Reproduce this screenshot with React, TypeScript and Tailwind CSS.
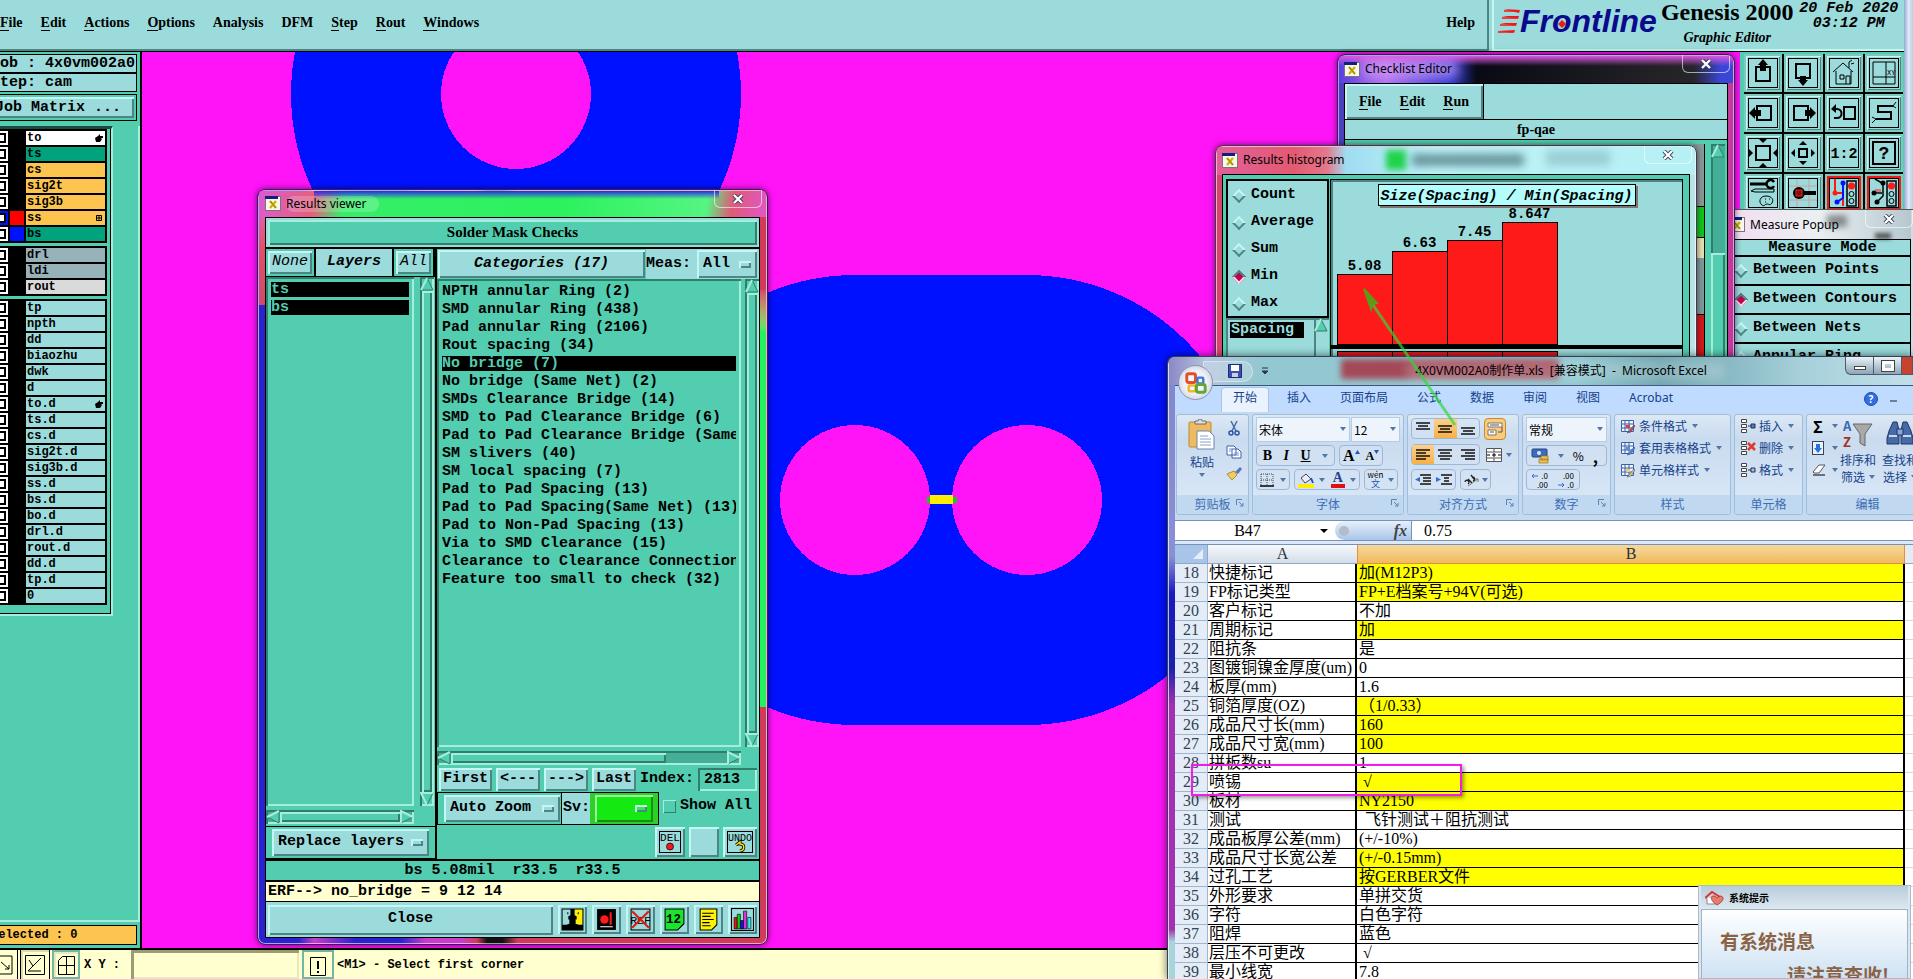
import React, { useState } from "react";
import clsx from "clsx";

const MONO = "font-['Liberation_Mono','Noto_Sans_CJK_SC',monospace]";
const SERIF = "font-['Liberation_Serif','Noto_Sans_CJK_SC',serif]";
const UI = "font-['Noto_Sans','Noto_Sans_CJK_SC',sans-serif]";
const CJK = "font-['Noto_Sans_CJK_SC',sans-serif]";

// Motif style bevels
const AQUA_UP = "bg-[#9bdbdb] shadow-[inset_2px_2px_#c4f6f3,inset_-2px_-2px_#4d8585]";
const TEAL_UP = "bg-[#53cdb0] shadow-[inset_2px_2px_#a4eedb,inset_-2px_-2px_#2f7f6b]";
const TEAL_DOWN = "bg-[#53cdb0] shadow-[inset_2px_2px_#2f7f6b,inset_-2px_-2px_#a4eedb]";

type Layer = { name: string; bg: string; swatch?: string; mark?: "hand" | "grid"; active?: boolean };

const AQ = "bg-[#9bdbdb]";
const layerGroups: Layer[][] = [
  [
    { name: "to", bg: "bg-white", mark: "hand" },
    { name: "ts", bg: "bg-[#00a37c]" },
    { name: "cs", bg: "bg-[#fdc550]" },
    { name: "sig2t", bg: "bg-[#fdc550]" },
    { name: "sig3b", bg: "bg-[#fdc550]" },
    { name: "ss", bg: "bg-[#fdc550]", swatch: "bg-[#ff0000]", mark: "grid", active: true },
    { name: "bs", bg: "bg-[#00a37c]", swatch: "bg-[#0011ff]" },
  ],
  [
    { name: "drl", bg: "bg-[#98b2ba]" },
    { name: "ldi", bg: "bg-[#98b2ba]" },
    { name: "rout", bg: "bg-[#dadada]" },
  ],
  [
    "tp", "npth", "dd", "biaozhu", "dwk", "d", "to.d", "ts.d", "cs.d", "sig2t.d",
    "sig3b.d", "ss.d", "bs.d", "bo.d", "drl.d", "rout.d", "dd.d", "tp.d", "0",
  ].map((name) => ({ name, bg: AQ, mark: name === "to.d" ? ("hand" as const) : undefined })),
];

const categories = [
  "NPTH annular Ring (2)",
  "SMD annular Ring (438)",
  "Pad annular Ring (2106)",
  "Rout spacing (34)",
  "No bridge (7)",
  "No bridge (Same Net) (2)",
  "SMDs Clearance Bridge (14)",
  "SMD to Pad Clearance Bridge (6)",
  "Pad to Pad Clearance Bridge (Same",
  "SM slivers (40)",
  "SM local spacing (7)",
  "Pad to Pad Spacing (13)",
  "Pad to Pad Spacing(Same Net) (13)",
  "Pad to Non-Pad Spacing (13)",
  "Via to SMD Clearance (15)",
  "Clearance to Clearance Connection",
  "Feature too small to check (32)",
];

const sheet: [number, string, string, boolean][] = [
  [18, "快捷标记", "加(M12P3)", true],
  [19, "FP标记类型", "FP+E档案号+94V(可选)", true],
  [20, "客户标记", "不加", false],
  [21, "周期标记", "加", true],
  [22, "阻抗条", "是", false],
  [23, "图镀铜镍金厚度(um)", "0", false],
  [24, "板厚(mm)", "1.6", false],
  [25, "铜箔厚度(OZ)", "（1/0.33）", true],
  [26, "成品尺寸长(mm)", "160", true],
  [27, "成品尺寸宽(mm)", "100", true],
  [28, "拼板数su", "1", false],
  [29, "喷锡", "√", true],
  [30, "板材", "NY2150", true],
  [31, "测试", "飞针测试＋阻抗测试", false],
  [32, "成品板厚公差(mm)", "(+/-10%)", false],
  [33, "成品尺寸长宽公差", "(+/-0.15mm)", true],
  [34, "过孔工艺", "按GERBER文件", true],
  [35, "外形要求", "单拼交货", false],
  [36, "字符", "白色字符", false],
  [37, "阻焊", "蓝色", false],
  [38, "层压不可更改", "√", false],
  [39, "最小线宽", "7.8", false],
];

const bars = [
  { label: "5.08", h: 71 },
  { label: "6.63", h: 94 },
  { label: "7.45", h: 105 },
  { label: "8.647", h: 123 },
];

/* ---------- small shared pieces ---------- */

function MenuItem({ text, underline = true }: { text: string; underline?: boolean }) {
  return (
    <button className={clsx(SERIF, "text-sm leading-5 font-bold whitespace-nowrap")}>
      {underline ? (
        <>
          <span className="border-b border-black">{text[0]}</span>
          {text.slice(1)}
        </>
      ) : (
        text
      )}
    </button>
  );
}

function Arrow({ dir }: { dir: "up" | "down" | "left" | "right" }) {
  const pts = { up: "7,1 13,13 1,13", down: "1,1 13,1 7,13", left: "1,7 13,1 13,13", right: "1,1 13,7 1,13" }[dir];
  const lit = { up: "1,13 7,1", down: "7,13 1,1 13,1", left: "1,7 13,1", right: "1,13 1,1 13,7" }[dir];
  return (
    <button aria-label={`Scroll ${dir}`} className="block size-3.5 shrink-0">
      <svg viewBox="0 0 14 14" className="size-full">
        <polygon points={pts} fill="#53cdb0" stroke="#2f7f6b" strokeWidth="1" />
        <polyline points={lit} fill="none" stroke="#a4eedb" strokeWidth="2" />
      </svg>
    </button>
  );
}

function VScroll() {
  return (
    <div className={clsx("flex w-3.5 shrink-0 flex-col", TEAL_DOWN)}>
      <Arrow dir="up" />
      <div className={clsx("mx-0.5 flex-1", TEAL_UP)} />
      <Arrow dir="down" />
    </div>
  );
}

function HScroll({ thumb }: { thumb: string }) {
  return (
    <div className="flex h-3.5 shrink-0 bg-[#45ae96] shadow-[inset_2px_2px_#2f7f6b,inset_-2px_-2px_#a4eedb]">
      <Arrow dir="left" />
      <div className="flex-1 py-0.5">
        <div className={clsx("h-full", TEAL_UP, thumb)} />
      </div>
      <Arrow dir="right" />
    </div>
  );
}

function OptionMenu({ label, value, className }: { label: string; value: string; className?: string }) {
  return (
    <div className={clsx("relative", className)}>
      <select aria-label={label} className="block size-full appearance-none pl-1.5 text-[15px] font-bold outline-none">
        <option>{value}</option>
      </select>
      <span className="pointer-events-none absolute inset-y-0 right-1.5 flex items-center">
        <span className="h-[7px] w-3 bg-[#9bdbdb]/30 shadow-[inset_2px_2px_#c4f6f3,inset_-2px_-2px_#4d8585]" />
      </span>
    </div>
  );
}

function WinIcon() {
  return (
    <svg viewBox="0 0 16 15" className="h-[15px] w-4 shrink-0">
      <rect x="0.5" y="0.5" width="15" height="14" fill="#f7f7ee" stroke="#777" />
      <rect x="0" y="0" width="13" height="3" fill="#10207c" />
      <path d="M5 5l6 7M11 5l-6 7" stroke="#c9b400" strokeWidth="2.2" />
      <path d="M5 5l6 7" stroke="#7a6f10" strokeWidth="0.8" />
    </svg>
  );
}

function CloseX({ className }: { className?: string }) {
  return (
    <button aria-label="Close window" className={clsx("flex h-[18px] w-12 items-center justify-center rounded-b-md border border-t-0 border-white/60", className)}>
      <svg viewBox="0 0 12 10" className="h-2.5 w-3">
        <path d="M2 1l8 8M10 1l-8 8" stroke="#333a55" strokeWidth="4" />
        <path d="M2 1l8 8M10 1l-8 8" stroke="#fff" strokeWidth="2.4" />
      </svg>
    </button>
  );
}

function Diamond({ name, label, checked, onPick }: { name: string; label: string; checked: boolean; onPick: () => void }) {
  return (
    <label className="flex h-[27px] items-center gap-[7px] text-[15px] font-bold whitespace-nowrap">
      <input
        type="radio"
        name={name}
        checked={checked}
        onChange={onPick}
        className="ml-0.5 size-2.5 shrink-0 rotate-45 appearance-none border-2 border-t-[#c4f6f3] border-r-[#4d8585] border-b-[#4d8585] border-l-[#c4f6f3] checked:border-t-[#4d8585] checked:border-r-[#f3dfe8] checked:border-b-[#f3dfe8] checked:border-l-[#4d8585] checked:bg-[#c3004e]"
      />
      {label}
    </label>
  );
}

/* ---------- header ---------- */

function TopBar() {
  return (
    <header className="flex h-[52px] shrink-0 border-b border-black bg-[#9bdbdb]">
      <nav className="flex flex-1 items-center gap-[18px] border-r-2 border-b-2 border-[#4d8585] pb-1">
        <MenuItem text="File" />
        <MenuItem text="Edit" />
        <MenuItem text="Actions" />
        <MenuItem text="Options" />
        <MenuItem text="Analysis" underline={false} />
        <MenuItem text="DFM" underline={false} />
        <MenuItem text="Step" />
        <MenuItem text="Rout" />
        <MenuItem text="Windows" />
        <span className="flex-1" />
        <span className="pr-3">
          <MenuItem text="Help" underline={false} />
        </span>
      </nav>
      <div className="ml-[3px] flex w-[412px] border-b-2 border-l-2 border-[#c4f6f3] pl-1">
        <div className="relative flex items-center pr-1 pb-2">
          <svg viewBox="0 0 22 26" className="h-[26px] w-[22px]">
            <path d="M6 1l16 1-1 3zM4 8l17 0-1 3zM2 15l17 0-1 3zM0 23l17-1-1 3z" fill="#f01818" />
            <path d="M6 3h14M4 10h14M2 17h14M0 24h14" stroke="#f01818" strokeWidth="1.4" />
          </svg>
          <span className="font-['Liberation_Sans',sans-serif] text-[32px] leading-8 font-bold text-[#0a0a8c] italic">Frontline</span>
          <svg viewBox="0 0 8 8" className="absolute top-5 left-[60px] size-2">
            <path d="M4 0l4 4-4 4-4-4z" fill="#f01818" />
          </svg>
        </div>
        <div className={clsx(SERIF, "flex flex-col items-center font-bold")}>
          <span className="h-[30px] text-2xl leading-6 whitespace-nowrap">Genesis 2000</span>
          <span className="text-sm leading-4 whitespace-nowrap italic">Graphic Editor</span>
        </div>
        <div className="flex flex-1 flex-col items-center pt-px text-[15px] leading-[15px] font-bold whitespace-nowrap italic">
          <span>20 Feb 2020</span>
          <span>03:12 PM</span>
        </div>
      </div>
    </header>
  );
}

/* ---------- layer side panel ---------- */

function LayerRow({ layer }: { layer: Layer }) {
  return (
    <label className="flex h-3.5 bg-black">
      <span className={clsx("flex w-[18px] items-center justify-end pr-0.5", layer.active ? "bg-[#0011ff]" : "bg-white")}>
        <input type="checkbox" className="size-2.5 appearance-none border-2 border-black bg-white" />
      </span>
      <span className="w-[18px] px-0.5">
        <span className={clsx("block h-full", layer.swatch)} />
      </span>
      <span className={clsx("flex flex-1 items-center justify-between px-px pr-0.5 text-xs leading-[14px] font-bold", layer.bg)}>
        {layer.name}
        {layer.mark === "hand" && (
          <svg viewBox="0 0 8 8" className="size-2">
            <path d="M0 4l3-2 2-2v2h3v2H6l1 1-2 3H1z" />
          </svg>
        )}
        {layer.mark === "grid" && (
          <svg viewBox="0 0 6 6" className="mr-px size-1.5">
            <path d="M0.5 0.5h5v5h-5zM3 0v6M0 3h6" fill="none" stroke="#000" />
          </svg>
        )}
      </span>
    </label>
  );
}

function SidePanel() {
  return (
    <aside className="-ml-3 flex w-[154px] shrink-0 flex-col border-r-2 border-black bg-[#53cdb0] pt-0.5 text-[15px] font-bold">
      <div className="mr-[3px] h-[19px] border border-black bg-[#9bdbdb] pl-0.5 leading-[17px] whitespace-pre">Job : 4x0vm002a0</div>
      <div className="mr-[3px] h-[19px] border border-black bg-[#9bdbdb] pl-0.5 leading-[17px] whitespace-pre">Step: cam</div>
      <div className="mt-0.5 mr-[3px] h-[27px] border border-black p-0.5">
        <button className={clsx("h-full w-full pl-1 text-left whitespace-pre", AQUA_UP)}>Job Matrix ...</button>
      </div>
      <div className="mt-[5px] flex flex-1 flex-col border-r-2 border-b-2 border-[#a4eedb]">
        <div className="mr-[25px] border-t-[3px] border-r-2 border-b-2 border-t-[#1c4a3e] border-r-[#a4eedb] border-b-[#a4eedb]">
          <div className="flex flex-col gap-[3px] border-r border-b border-black pr-[3px] pb-2">
            {layerGroups.map((group, i) => (
              <div key={i} className="flex flex-col gap-0.5 border-2 border-black bg-black">
                {group.map((layer) => (
                  <LayerRow key={layer.name} layer={layer} />
                ))}
              </div>
            ))}
          </div>
        </div>
      </div>
      <div className="my-[3px] mr-[3px] h-5 border border-black bg-[#fdc550] pl-0.5 text-xs leading-[18px]">Selected : 0</div>
    </aside>
  );
}

/* ---------- board canvas ---------- */

function Board() {
  return (
    <div className="flex-1 overflow-hidden bg-[#ff14f8]">
      <svg className="h-full w-full" shapeRendering="crispEdges">
        <circle cx="374" cy="42" r="225" fill="#0011ff" />
        <circle cx="374" cy="42" r="75" fill="#ff14f8" />
        <rect x="488" y="223" width="622" height="450" rx="225" fill="#0011ff" />
        <circle cx="713" cy="448" r="75" fill="#ff14f8" />
        <circle cx="885" cy="448" r="75" fill="#ff14f8" />
        <rect x="785" y="445" width="30" height="6" fill="#18c81c" />
        <rect x="788" y="443" width="23" height="9" fill="#fdee00" />
      </svg>
    </div>
  );
}

/* ---------- tool palette ---------- */

const K = { fill: "none", stroke: "#000", strokeWidth: 2 } as const;
const tools: { name: string; red?: boolean; art: React.ReactNode }[] = [
  { name: "Pan up", art: <><rect x="8" y="9" width="14" height="14" {...K} /><path d="M15 1l5 6h-2v6h-6V7h-2z" /></> },
  { name: "Pan down", art: <><rect x="8" y="6" width="14" height="14" {...K} /><path d="M15 28l5-6h-2v-4h-6v4h-2z" /></> },
  { name: "Home", art: <><path d="M4 14L14 5l10 9M7 13v13h15V13M20 10V4M11 17h4v4h-4zM17 26v-8h4v8" fill="none" stroke="#000" /><path d="M20 4l3-2M22 6l3-1" stroke="#000" fill="none" /></> },
  { name: "Coordinates", art: <><path d="M4 4h22v22H4zM4 19h22M17 4v22" fill="none" stroke="#000" /><text x="18" y="17" fontSize="7">XY</text></> },
  { name: "Pan left", art: <><rect x="9" y="8" width="14" height="14" {...K} /><path d="M1 15l6-6v3h6v6H7v3z" /></> },
  { name: "Pan right", art: <><rect x="6" y="8" width="14" height="14" {...K} /><path d="M28 15l-6-6v3h-5v6h5v3z" /></> },
  { name: "Previous view", art: <><rect x="15" y="9" width="11" height="12" {...K} /><path d="M4 11h4a3 3 0 0 1 0 9H5" {...K} /><path d="M2 11l5-5v9z" /></> },
  { name: "Serpentine", art: <><path d="M24 8H9v6h13v7H7" {...K} /><path d="M24 8l3-4M24 8l3 2M7 21l-4-2M7 21l-4 4" fill="none" stroke="#000" /></> },
  { name: "Zoom out", art: <><rect x="8" y="8" width="14" height="14" {...K} /><path d="M11 1h8l-4 4zM11 29h8l-4-4zM1 11v8l4-4zM29 11v8l-4-4z" /></> },
  { name: "Zoom in", art: <><rect x="11" y="11" width="8" height="8" {...K} /><path d="M11 7h8l-4-4zM11 23h8l-4 4zM7 11v8l-4-4zM23 11v8l4-4z" /></> },
  { name: "Scale", art: <text x="15" y="20" fontSize="15" fontWeight="bold" textAnchor="middle">1:2</text> },
  { name: "Help", art: <><rect x="4" y="4" width="22" height="22" {...K} /><text x="15" y="21" fontSize="18" fontWeight="bold" textAnchor="middle">?</text></> },
  { name: "Tools", art: <><path d="M2 6h17" stroke="#000" strokeWidth="3" /><path d="M26 4a4 4 0 1 0 0 4" stroke="#000" strokeWidth="2.5" fill="none" /><path d="M3 13l4-2h19v3H7z" fill="none" stroke="#000" /><path d="M14 27c-4-3-2-9 4-9s8 4 6 7-3 1-5 1-3 3-5 1z" fill="none" stroke="#000" /><path d="M17 21h1M21 21h1M17 24h1" stroke="#000" /></> },
  { name: "Snap", art: <><path d="M9 1v28M21 1v28M1 8h28M1 22h28" stroke="#c8a0a4" /><path d="M13 15h15" stroke="#000" strokeWidth="4" /><circle cx="11" cy="15" r="6" /><rect x="8" y="12" width="6" height="6" fill="#7a1010" stroke="#ff2020" /></> },
  { name: "Net colors", red: true, art: <><path d="M6 1v14h8v13" fill="none" stroke="#ff1a1a" strokeWidth="2" /><path d="M14 6v14l-6 4" fill="none" stroke="#0011ff" strokeWidth="2" /><circle cx="14" cy="5" r="2.5" fill="#0011ff" /><circle cx="8" cy="24" r="2.5" fill="#0011ff" /><circle cx="6" cy="15" r="2.5" fill="#ff1a1a" /><rect x="18" y="3" width="9" height="25" fill="#9bdbdb" stroke="#000" strokeWidth="1.5" /><circle cx="22.5" cy="8" r="3.5" fill="#ff1a1a" /><circle cx="22.5" cy="16" r="2.5" fill="none" stroke="#000" /><circle cx="22.5" cy="23" r="2.5" fill="none" stroke="#000" /></> },
  { name: "Net check", red: true, art: <><path d="M14 6v12l-6 6M6 15h7M13 5L6 1" fill="none" stroke="#000" strokeWidth="1.5" /><path d="M7 11v3M9 11v3M11 11v3" stroke="#ff1a1a" /><circle cx="14" cy="5" r="2.5" /><circle cx="8" cy="24" r="2.5" /><circle cx="5" cy="15" r="2.5" /><rect x="18" y="3" width="9" height="25" fill="#9bdbdb" stroke="#000" strokeWidth="1.5" /><circle cx="22.5" cy="8" r="3.5" fill="#ff1a1a" /><circle cx="22.5" cy="16" r="2.5" fill="none" stroke="#000" /><circle cx="22.5" cy="23" r="2.5" fill="none" stroke="#000" /></> },
];

function ToolPalette() {
  return (
    <aside className="w-[164px] shrink-0 bg-[#53cdb0] pt-0.5 pr-px pl-1">
      <div className="grid grid-cols-4 gap-0.5 bg-black">
        {tools.map((t) => (
          <button key={t.name} aria-label={t.name} className="h-[38px] border-2 border-[#7ec9bd] bg-[#9bdbdb] p-0.5 shadow-[inset_1px_1px_#c4f6f3,inset_-1px_-1px_#4d8585]">
            <svg viewBox="0 0 30 30" className={clsx("mx-auto size-[30px]", t.red && "outline-2 outline-[#f01818]")}>
              <rect x="0.5" y="0.5" width="29" height="29" fill="none" stroke="#000" />
              {t.art}
            </svg>
          </button>
        ))}
      </div>
    </aside>
  );
}

/* ---------- bottom bar ---------- */

function BottomBar() {
  return (
    <footer className="flex h-[31px] shrink-0 border-t-2 border-black bg-[#ffffcf] text-xs font-bold">
      <button aria-label="Absolute" className="w-[18px] overflow-hidden border-r border-black">
        <svg viewBox="0 0 18 27" className="h-[27px] w-[18px]"><path d="M-8 5h20v18H-8M1 11l8 7M9 14v4H5" fill="none" stroke="#000" /></svg>
      </button>
      <button aria-label="Angle" className="ml-0.5 w-[30px] border-r border-l border-black shadow-[inset_2px_2px_#dcdcb0]">
        <svg viewBox="0 0 28 27" className="h-[27px] w-7"><path d="M4.5 4.5h19v19h-19zM7 20L20 7M7 20h13M8 9l4 6" fill="none" stroke="#000" /></svg>
      </button>
      <button aria-label="Grid" className="ml-0.5 w-7 border-2 border-[#6fb8a4] shadow-[inset_2px_2px_#e8e8c0]">
        <svg viewBox="0 0 24 27" className="h-[27px] w-6"><path d="M4.5 8.5l4-4h12v18h-16zM12.5 4v18M4 13.5h16" fill="none" stroke="#000" /></svg>
      </button>
      <label className="flex items-center">
        <span className="w-[51px] pl-1 whitespace-pre">X Y :</span>
        <input className="h-full w-[168px] bg-[#ffffcf] px-2 outline-none shadow-[inset_3px_3px_#9c9c74,inset_-2px_-2px_#e8e8c0]" />
      </label>
      <button aria-label="Alert" className="ml-[3px] w-8 border-2 border-[#6fb8a4]">
        <svg viewBox="0 0 28 27" className="h-[27px] w-7"><path d="M6.5 5.5h15v18h-15z" fill="none" stroke="#000" /><path d="M14 9v8M14 19v2" stroke="#000" strokeWidth="2" /></svg>
      </button>
      <span className="flex items-center pl-[3px] whitespace-pre">{"<M1> - Select first corner"}</span>
    </footer>
  );
}

/* ---------- results viewer ---------- */

const actionIcons: [string, React.ReactNode][] = [
  ["Compare", <><rect x="1" y="1" width="20" height="20" fill="#9bdbdb" /><path d="M13 1h8v15h-8z" fill="#ffee00" /><path d="M9 1h4v6l2 1v3h-1v4l3 1h4v5H1v-5h4l3-1v-4H7V8l2-1z" /><path d="M6 5h1M16 5h1" stroke="#000" strokeWidth="2" /><path d="M1 1h20v20H1z" fill="none" stroke="#000" /></>],
  ["Record", <><rect x="2" y="1" width="18" height="20" /><circle cx="9" cy="11" r="4" fill="#ff1a1a" /><path d="M15 4v12" stroke="#ff1a1a" strokeWidth="2" /><path d="M5 18h12" stroke="#fff" /></>],
  ["Clear reference", <><rect x="2" y="1" width="18" height="20" fill="none" stroke="#000" /><text x="11" y="15" fontSize="11" fontWeight="normal" textAnchor="middle">REF</text><path d="M3 3l16 16M19 3L3 19" stroke="#e01818" strokeWidth="2" /></>],
  ["Numbers", <><path d="M2 1h18v14l-6 6H2z" fill="#19e62a" stroke="#000" /><text x="10" y="14" fontSize="12" textAnchor="middle">12</text></>],
  ["Notes", <><path d="M3 1h16v15l-5 5H3z" fill="#fff200" stroke="#000" /><path d="M5 5h11M5 8h8M5 11h11M5 14h7M5 17h8" stroke="#000" /></>],
  ["Histogram", <><rect x="0.5" y="0.5" width="21" height="21" fill="none" stroke="#000" /><path d="M3 9h3v11H3z" fill="#e11" stroke="#000" strokeWidth=".6" /><path d="M6 6h3v14H6z" fill="#1c1" stroke="#000" strokeWidth=".6" /><path d="M9 12h3v8H9z" fill="#11e" stroke="#000" strokeWidth=".6" /><path d="M12 3h3v17h-3z" fill="#d3d" stroke="#000" strokeWidth=".6" /><path d="M16 9h3v11h-3z" fill="#3ee" stroke="#000" strokeWidth=".6" /></>],
];

function ResultsViewer() {
  const [selected, setSelected] = useState("No bridge (7)");
  return (
    <section className="absolute top-[189px] left-[257px] flex h-[756px] w-[511px] flex-col overflow-hidden rounded-lg border border-[#3b1a6a] bg-[linear-gradient(90deg,#2a22cf_0,#2a22cf_8%,#c83cc8_11%,#2a22cf_19%,#2a22cf_28%,#c83cc8_33%,#c83cc8_40%,#d23a5a_43%,#111_45%,#111_48%,#d23a5a_51%,#d23a5a_100%)] px-[7px] pb-1.5 shadow-[0_0_6px_rgba(0,0,0,0.6),inset_0_0_0_1px_rgba(255,255,255,0.6)]">
      {/* glass frame tints */}
      <div className="absolute top-0 left-px h-[115px] w-1.5 bg-linear-to-b from-[#e264d8] via-[#e2506a] to-[#d2486a]" />
      <div className="absolute top-[100px] right-px h-[417px] w-1.5 bg-linear-to-b from-[#d2486a] via-[#25f060] via-10% to-[#25f060]" />
      <div className="absolute inset-x-px top-px h-[26px] bg-[linear-gradient(100deg,#dd5bd0_0,#e4607c_11%,#35ee68_17%,#2cf25e_60%,#55f582_88%,#e05a78_93%,#df58c8_100%)]" />
      <div className="absolute top-px right-12 left-14 h-2 bg-linear-to-b from-[#2a2ae8] to-transparent" />
      <div className={clsx(UI, "relative flex h-[27px] shrink-0 items-center gap-[5px] text-xs")}>
        <WinIcon />
        <span className="rounded-full bg-white/20 pr-3">Results viewer</span>
        <CloseX className="absolute top-0 -right-0.5" />
      </div>
      <div className="relative flex min-h-0 flex-1 flex-col border border-black bg-[#53cdb0] text-[15px] font-bold">
        <div className="h-[31px] shrink-0 border-b-2 border-black bg-[#9bdbdb] p-0.5">
          <div className={clsx(SERIF, "h-full text-center text-[15px] leading-[25px]", TEAL_UP)}>Solder Mask Checks</div>
        </div>
        <div className="flex min-h-0 flex-1 border-b-2 border-black">
          <div className="flex w-[171px] flex-col border-r-2 border-black">
            <div className="flex h-7 shrink-0 gap-0.5 border-b border-black bg-black pr-0.5 text-[15px]">
              <div className="w-[48px] bg-[#53cdb0] p-0.5"><button className={clsx("size-full font-normal italic", AQUA_UP)}>None</button></div>
              <div className="flex-1 bg-[#9bdbdb] text-center leading-[26px] italic">Layers</div>
              <div className="w-[39px] bg-[#53cdb0] p-0.5"><button className={clsx("size-full font-normal italic", AQUA_UP)}>All</button></div>
            </div>
            <div className="flex min-h-0 flex-1 gap-1.5 pr-px">
              <div className="flex flex-1 flex-col gap-1">
                <ul className={clsx("flex flex-1 flex-col gap-[3px] px-[5px] pt-[5px] leading-[15px] text-[#53cdb0]", TEAL_DOWN)}>
                  <li className="bg-black">ts</li>
                  <li className="bg-black">bs</li>
                </ul>
                <HScroll thumb="w-full" />
              </div>
              <div className="flex pb-[18px]"><VScroll /></div>
            </div>
            <div className="mt-0.5 h-[33px] border-t border-b border-black px-1.5 py-0.5">
              <OptionMenu label="Layer mode" value="Replace layers" className={clsx("h-full", AQUA_UP)} />
            </div>
          </div>
          <div className="flex min-w-0 flex-1 flex-col">
            <div className="flex h-[30px] shrink-0 items-center bg-[#9bdbdb]">
              <div className="h-full w-[209px] bg-[#53cdb0] p-px"><button className={clsx("size-full italic", AQUA_UP)}>Categories (17)</button></div>
              <span className="flex-1">Meas:</span>
              <OptionMenu label="Meas:" value="All" className={clsx("mr-0.5 h-7 w-[60px]", AQUA_UP)} />
            </div>
            <div className="flex min-h-0 flex-1 gap-1 pr-px">
              <div className="flex w-[304px] flex-col gap-1">
                <ul className={clsx("flex-1 overflow-hidden px-[5px] pt-[5px]", TEAL_DOWN)}>
                  {categories.map((c) => (
                    <li key={c} className="mb-[3px]">
                      <button
                        onClick={() => setSelected(c)}
                        className={clsx("block h-[15px] w-full overflow-hidden text-left leading-[15px] whitespace-nowrap", selected === c && "bg-black text-[#53cdb0]")}
                      >
                        {c}
                      </button>
                    </li>
                  ))}
                </ul>
                <HScroll thumb="w-[78%]" />
              </div>
              <div className="flex pb-[18px]"><VScroll /></div>
            </div>
            <div className="flex h-[27px] shrink-0 items-center gap-1 px-0.5 pt-0.5">
              <button className={clsx("h-[23px] w-[53px]", AQUA_UP)}>First</button>
              <button className={clsx("h-[23px] w-11", AQUA_UP)}>{"<---"}</button>
              <button className={clsx("h-[23px] w-11", AQUA_UP)}>{"--->"}</button>
              <button className={clsx("h-[23px] w-11", AQUA_UP)}>Last</button>
              <label htmlFor="idx">Index:</label>
              <input id="idx" defaultValue="2813" className={clsx("h-[23px] w-[59px] pl-1.5 outline-none", TEAL_DOWN)} />
            </div>
            <div className="flex h-[33px] shrink-0">
              <div className="w-[125px] border border-black py-0.5 pr-px pl-1.5">
                <OptionMenu label="Zoom mode" value="Auto Zoom" className={clsx("h-full", AQUA_UP)} />
              </div>
              <div className="flex w-[97px] items-center border-y border-r border-black bg-[#9bdbdb] pl-px">
                <span className="flex-1">Sv:</span>
                <div className="h-full w-[68px] bg-[#2fcf2a] px-[5px] py-0.5">
                  <OptionMenu label="Sv:" value="" className="h-full bg-[#14ea12] shadow-[inset_2px_2px_#9df5a0,inset_-2px_-2px_#1a8a1c]" />
                </div>
              </div>
              <label className="flex h-7 items-center gap-1 pl-1 whitespace-nowrap">
                <input type="checkbox" className="size-[13px] appearance-none bg-[#53cdb0] shadow-[inset_1px_1px_#a4eedb,inset_-1px_-1px_#2f7f6b]" />
                Show All
              </label>
            </div>
            <div className="flex h-[34px] shrink-0 items-center justify-end gap-1 pr-0.5">
              <button aria-label="Delete" className={clsx("size-[30px] p-1", AQUA_UP)}>
                <svg viewBox="0 0 22 22"><rect x="0.5" y="0.5" width="21" height="21" fill="none" stroke="#000" /><text x="11" y="10" fontSize="11" fontWeight="normal" textAnchor="middle">DEL</text><circle cx="11" cy="15.5" r="3.5" fill="#f01818" stroke="#000" strokeWidth=".7" /></svg>
              </button>
              <button aria-label="Blank" className={clsx("size-[30px]", AQUA_UP)} />
              <button aria-label="Undo" className={clsx("h-[30px] w-[34px] p-1", AQUA_UP)}>
                <svg viewBox="0 0 26 22"><rect x="0.5" y="0.5" width="25" height="21" fill="none" stroke="#000" /><text x="13" y="10" fontSize="10" fontWeight="normal" textAnchor="middle">UNDO</text><path d="M9 14l4-3v2c5 0 5 6 0 7" fill="none" stroke="#000" strokeWidth="3" /><path d="M9 14l4-3v2c5 0 5 6 0 7" fill="none" stroke="#ffe000" strokeWidth="1.5" /></svg>
              </button>
            </div>
          </div>
        </div>
        <div className="h-[21px] shrink-0 border-b-2 border-black text-center leading-[19px] whitespace-pre">bs 5.08mil  r33.5  r33.5</div>
        <div className="h-5 shrink-0 border-b border-black bg-[#ffffcf] pl-0.5 leading-[19px] whitespace-pre">{"ERF--> no_bridge = 9 12 14"}</div>
        <div className="flex h-[35px] shrink-0 items-center gap-[5px] bg-[#9bdbdb] px-0.5">
          <button className={clsx("h-[30px] flex-1", AQUA_UP)}>Close</button>
          {actionIcons.map(([name, art]) => (
            <button key={name} aria-label={name} className={clsx("size-[29px] p-[3px]", AQUA_UP)}>
              <svg viewBox="0 0 22 22">{art}</svg>
            </button>
          ))}
        </div>
      </div>
    </section>
  );
}

/* ---------- checklist, measure, histogram ---------- */

function ChecklistEditor() {
  return (
    <section className="absolute top-[54px] left-[1337px] flex h-[330px] w-[398px] flex-col overflow-hidden rounded-t-lg border border-[#3b1a6a] bg-[linear-gradient(90deg,#4b3fc0,#a838b8_50%,#c23a9a)] px-1.5 shadow-[0_0_6px_rgba(0,0,0,0.6),inset_0_0_0_1px_rgba(255,255,255,0.5)]">
      <div className="absolute inset-x-px top-px h-[27px] bg-[linear-gradient(90deg,#5a3fe0_0,#b070f0_12%,#2a3bd8_28%,#0a0a14_35%,#26262a_90%,#3a46d8_97%)]" />
      <div className="absolute inset-x-px top-px h-2.5 bg-linear-to-b from-[#d957e0] to-transparent" />
      <div className="absolute top-1.5 left-6 h-4 w-24 bg-[#d9a0f4]/70 blur-[6px]" />
      <div className={clsx(UI, "relative flex h-7 shrink-0 items-center gap-[5px] text-xs")}>
        <WinIcon />
        Checklist Editor
        <CloseX className="absolute top-0 -right-0.5" />
      </div>
      <div className="relative flex flex-1 flex-col border border-black bg-[#9bdbdb]">
        <div className="flex h-[36px] border-b border-black">
          <div className={clsx("flex items-center gap-[18px] border-r border-black px-3.5", AQUA_UP)}>
            <MenuItem text="File" />
            <MenuItem text="Edit" />
            <MenuItem text="Run" />
          </div>
        </div>
        <div className={clsx(SERIF, "h-5 border-b border-black text-center text-sm leading-[19px] font-bold")}>fp-qae</div>
        <div className="flex flex-1 justify-end gap-1.5 bg-[#53cdb0] pt-1 pr-0.5">
          {/* status column of the check rows */}
          <div className="flex w-3 flex-col border-r border-black">
            <span className="h-[62px] bg-[#8a9a9a]" />
            <span className="h-8 border-y border-black bg-[#12c61a]" />
            <span className="h-5 bg-[#e8e0b0]" />
            <span className="h-14 bg-[#7f9b9b]" />
            <span className="flex-1 border-t border-black bg-[#d81a1a]" />
          </div>
          <div className="flex w-3.5 flex-col bg-[#45ae96] shadow-[inset_2px_2px_#2f7f6b]">
            <Arrow dir="up" />
            <span className="h-[95px]" />
            <span className={clsx("flex-1", TEAL_UP)} />
          </div>
        </div>
      </div>
    </section>
  );
}

const measureModes = ["Between Points", "Between Contours", "Between Nets", "Annular Ring"];

function MeasurePopup() {
  const [mode, setMode] = useState(measureModes[1]);
  return (
    <section className="absolute top-[209px] right-0 left-[1726px] h-[160px] overflow-hidden border-t border-[#555] bg-[#c9dde2] pr-0.5 text-[15px] font-bold">
      <div className={clsx(UI, "relative flex h-[29px] items-center gap-[5px] bg-linear-to-r from-[#f2dcf0] via-[#eaf0f2] to-[#b6c8cf] pl-[3px] text-xs font-normal")}>
        <span className="absolute right-16 bottom-3 h-3 w-5 bg-black/40 blur-[3px]" />
        <span className="absolute right-5 bottom-0 h-1.5 w-4 bg-black/60 blur-[2px]" />
        <WinIcon />
        Measure Popup
        <CloseX className="absolute top-0 -right-0.5" />
      </div>
      <div className="border border-black bg-[#9bdbdb]">
        <div className="h-[15px] text-center leading-[15px]"><span className="pl-2">Measure Mode</span></div>
        {measureModes.map((m) => (
          <div key={m} className="border-t-2 border-black pl-[7px]">
            <Diamond name="measure" label={m} checked={mode === m} onPick={() => setMode(m)} />
          </div>
        ))}
      </div>
    </section>
  );
}

const stats = ["Count", "Average", "Sum", "Min", "Max"];

function Histogram() {
  const [stat, setStat] = useState("Min");
  return (
    <section className="absolute top-[145px] left-[1215px] flex h-[240px] w-[482px] flex-col overflow-hidden rounded-t-lg border border-[#4a3550] bg-[linear-gradient(90deg,#d8466e_0,#d8466e_4%,#9fd8dc_96%,#bfe6ea_100%)] px-1.5 shadow-[0_0_6px_rgba(0,0,0,0.6),inset_0_0_0_1px_rgba(255,255,255,0.6)]">
      <div className="absolute inset-x-px top-px h-7 bg-[linear-gradient(90deg,#e0609a_0,#e45a72_16%,#e4788c_23%,#9fdcf2_27%,#bdf4f8_45%,#b5f0f4_100%)]" />
      <span className="absolute top-1 left-[170px] h-5 w-5 bg-[#1fd24a] blur-[3px]" />
      <span className="absolute top-2 left-[196px] h-3 w-28 bg-[#2f5560]/60 blur-[4px]" />
      <span className="absolute top-1 left-[330px] h-4 w-16 bg-[#6f9aa5]/40 blur-[4px]" />
      <div className={clsx(UI, "relative flex h-[28px] shrink-0 items-center gap-[5px] text-xs")}>
        <WinIcon />
        Results histogram
        <CloseX className="absolute top-0 -right-0.5" />
      </div>
      <div className="relative flex min-h-0 flex-1 gap-px border border-black bg-[#53cdb0] py-1 pr-1.5 pl-[3px] text-[15px] font-bold">
        <div className="flex w-[103px] flex-col">
          <div className="h-[139px] border-2 border-black bg-[#9bdbdb] pt-px pl-1">
            {stats.map((s) => (
              <Diamond key={s} name="stat" label={s} checked={stat === s} onPick={() => setStat(s)} />
            ))}
          </div>
          <div className="flex flex-1 justify-between bg-[#9bdbdb] pr-px shadow-[inset_2px_2px_#4d8585]">
            <span className="mt-1 ml-1 h-4 w-[74px] bg-black pl-px leading-[15px] text-[#9bdbdb]">Spacing</span>
            <div className="w-3.5 shadow-[inset_2px_0_#4d8585]">
              <Arrow dir="up" />
            </div>
          </div>
        </div>
        <div className="relative flex min-w-0 flex-1 flex-col border border-black bg-[#9bdbdb] shadow-[inset_2px_2px_#4d8585]">
          <div className="absolute top-1 left-1/2 -ml-[129px] h-[22px] w-[258px] border border-black bg-[#b3fdfd] text-center leading-6 whitespace-pre italic shadow-[2px_2px_#7d7474]">Size(Spacing) / Min(Spacing)</div>
          <div className="flex h-[165px] shrink-0 items-end pl-1.5">
            {bars.map((b) => (
              <div key={b.label} className="w-[55px] text-center text-sm leading-4 font-bold">
                {b.label}
                <div className="-mr-px border border-black bg-[#ff1a1a]" style={{ height: b.h }} />
              </div>
            ))}
          </div>
          <div className="h-1 shrink-0 bg-black" />
          <div className="mt-0.5 flex flex-1 pl-1.5">
            {bars.map((b) => (
              <div key={b.label} className="-mr-px w-14 border border-black bg-[#d81a22]" />
            ))}
          </div>
        </div>
      </div>
    </section>
  );
}

/* ---------- excel ---------- */

function Caret() {
  return (
    <svg viewBox="0 0 6 4" className="h-1 w-1.5 shrink-0">
      <path d="M0 0h6L3 4z" fill="#5276a8" />
    </svg>
  );
}

function Group({ label, launcher, className, children }: { label: string; launcher?: boolean; className: string; children: React.ReactNode }) {
  return (
    <div className={clsx("flex shrink-0 flex-col overflow-hidden rounded-[3px] border border-[#9ebfdb] bg-linear-to-b from-[#dce8f5] via-[#c9dbee] via-25% to-[#dceafa]", className)}>
      <div className="min-h-0 flex-1 px-[3px]">{children}</div>
      <div className="relative h-[19px] shrink-0 bg-[#c0d8f0] text-center text-xs leading-[18px] text-[#3e6db5]">
        {label}
        {launcher && (
          <svg viewBox="0 0 8 8" className="absolute top-1 right-1 size-2">
            <path d="M0.5 6V0.5H6M3 3l4 4M7 4v3H4" fill="none" stroke="#5b82b5" />
          </svg>
        )}
      </div>
    </div>
  );
}

const BTN = "flex h-[21px] items-center rounded-sm border border-[#9db8d6] bg-[#d3e2f4]/60";

function Lines({ kind }: { kind: "l" | "c" | "r" | "t" | "m" | "b" }) {
  const d = {
    l: "M1 2h14M1 5h10M1 8h14M1 11h10",
    c: "M1 2h14M3 5h10M1 8h14M3 11h10",
    r: "M1 2h14M5 5h10M1 8h14M5 11h10",
    t: "M1 1h14M3 4h10M1 7h14",
    m: "M1 4h14M3 7h10M1 10h14",
    b: "M1 6h14M3 9h10M1 12h14",
  }[kind];
  return (
    <button aria-label={`Align ${kind}`} className={clsx("flex h-full flex-1 items-center justify-center", (kind === "m" || kind === "l") && "bg-linear-to-b from-[#fbd08a] to-[#f9b045]")}>
      <svg viewBox="0 0 16 13" className="h-[13px] w-4">
        <path d={d} stroke="#111" strokeWidth="1.5" />
      </svg>
    </button>
  );
}

function TableIcon({ accent }: { accent: string }) {
  return (
    <svg viewBox="0 0 16 16" className="size-4 shrink-0">
      <path d="M1.5 2.5h12v11h-12zM1 6h12M1 10h12M5 2v11M9 2v11" fill="#eef4fd" stroke="#3c62a5" />
      <path d="M6 7h4v3H6z" fill={accent} />
      <path d="M14 7l-5 6-2 2 4-1 4-6z" fill={accent} stroke="#33508c" strokeWidth=".6" />
    </svg>
  );
}

const tabs = ["开始", "插入", "页面布局", "公式", "数据", "审阅", "视图", "Acrobat"];

function Ribbon() {
  return (
    <div className={clsx(CJK, "flex h-[108px] shrink-0 gap-[3px] overflow-hidden bg-[#c5d9f1] pt-0.5 pb-[5px] pl-px text-xs text-[#15428b]")}>
      <Group label="剪贴板" launcher className="w-[73px]">
        <div className="flex gap-1.5 pt-1">
          <button className="flex w-10 flex-col items-center pl-1">
            <svg viewBox="0 0 28 32" className="h-8 w-7">
              <rect x="1" y="3" width="22" height="25" rx="1" fill="#eebb63" stroke="#b98a3a" />
              <path d="M7 5V2h3a2 2 0 0 1 4 0h4v3z" fill="#ddd" stroke="#555" strokeWidth=".8" />
              <path d="M9 12h12l5 5v13H9z" fill="#fff" stroke="#6a86b5" />
              <path d="M12 17h8M12 20h11M12 23h11M12 26h11" stroke="#8aa4cc" />
            </svg>
            <span className="leading-[22px]">粘贴</span>
            <Caret />
          </button>
          <div className="flex flex-col items-center gap-2 pt-0.5">
            <button aria-label="Cut">
              <svg viewBox="0 0 14 16" className="h-4 w-3.5"><path d="M4 0l5 10M10 0L5 10" stroke="#4d6fa5" strokeWidth="1.5" /><circle cx="4" cy="12" r="2" fill="none" stroke="#2856a8" strokeWidth="1.5" /><circle cx="10" cy="12" r="2" fill="none" stroke="#2856a8" strokeWidth="1.5" /></svg>
            </button>
            <button aria-label="Copy">
              <svg viewBox="0 0 16 14" className="h-3.5 w-4"><path d="M1 1h7l2 2v7H1zM6 4h6l3 3v6H6z" fill="#fff" stroke="#3c62a5" /><path d="M8 8h5M8 10h5M3 4h3M3 6h2" stroke="#6e92cc" /></svg>
            </button>
            <button aria-label="Format painter">
              <svg viewBox="0 0 16 14" className="h-3.5 w-4"><path d="M1 7l7-3 3 4-5 5z" fill="#f3cf57" stroke="#8a6a20" strokeWidth=".7" /><path d="M9 5l5-5 2 2-4 5z" fill="#5a74c0" /></svg>
            </button>
          </div>
        </div>
      </Group>
      <Group label="字体" launcher className="w-[152px]">
        <div className="flex flex-col gap-[3px] pt-0.5 text-black">
          <div className="flex h-[25px] gap-px">
            <div className="relative w-[94px]">
              <select aria-label="Font" className="block size-full appearance-none border border-[#b5cce8] bg-[#edf4fc] pl-0.5 text-xs"><option>宋体</option></select>
              <span className="pointer-events-none absolute top-2.5 right-1 flex"><Caret /></span>
            </div>
            <div className="relative flex-1">
              <select aria-label="Font size" className="block size-full appearance-none border border-[#b5cce8] bg-[#edf4fc] pl-0.5 text-xs"><option>12</option></select>
              <span className="pointer-events-none absolute top-2.5 right-1 flex"><Caret /></span>
            </div>
          </div>
          <div className={clsx(SERIF, "flex gap-1 text-sm")}>
            <div className={clsx(BTN, "w-[79px] justify-around")}>
              <button className="font-bold">B</button>
              <button className="font-bold italic">I</button>
              <button className="font-bold underline">U</button>
              <Caret />
            </div>
            <div className={clsx(BTN, "w-11 justify-around")}>
              <button aria-label="Grow font" className="flex text-base leading-5 font-bold">A<svg viewBox="0 0 5 4" className="mt-1 h-1 w-[5px]"><path d="M0 4h5L2.5 0z" fill="#2856a8" /></svg></button>
              <button aria-label="Shrink font" className="flex text-xs leading-5 font-bold">A<svg viewBox="0 0 5 4" className="mt-1 h-1 w-[5px]"><path d="M0 0h5L2.5 4z" fill="#2856a8" /></svg></button>
            </div>
          </div>
          <div className="flex gap-1">
            <button aria-label="Borders" className={clsx(BTN, "w-[34px] justify-around")}>
              <svg viewBox="0 0 14 14" className="size-3.5"><path d="M1 1h12M1 7h12M1 1v12M7 1v12M13 1v12" stroke="#444" strokeDasharray="1 1" /><path d="M0 13h14" stroke="#000" strokeWidth="1.5" /></svg>
              <Caret />
            </button>
            <div className={clsx(BTN, "w-[66px] justify-around")}>
              <svg viewBox="0 0 16 16" className="size-4"><path d="M3 6l5-4 5 5-6 4z" fill="#e7eef8" stroke="#445" /><path d="M13 6l2 5" stroke="#2856a8" strokeWidth="2" /><rect y="12" width="16" height="4" fill="#ffee00" /></svg>
              <Caret />
              <button className={clsx(SERIF, "border-b-4 border-[#e01010] px-0.5 text-sm leading-3 font-bold text-[#23458c]")}>A</button>
              <Caret />
            </div>
            <button className={clsx(BTN, "w-[34px] justify-around")}>
              <span className="flex flex-col items-center"><span className="text-[8px] leading-[9px]">wén</span><span className="text-[9px] leading-[10px] text-[#2856a8]">文</span></span>
              <Caret />
            </button>
          </div>
        </div>
      </Group>
      <Group label="对齐方式" launcher className="w-[112px]">
        <div className="flex flex-col gap-1 pt-[3px]">
          <div className="flex gap-1">
            <div className={clsx(BTN, "w-[69px]")}><Lines kind="t" /><Lines kind="m" /><Lines kind="b" /></div>
            <button aria-label="Wrap text" className="flex h-[22px] w-[22px] items-center justify-center rounded-sm border border-[#c88a2c] bg-[#fbcb7d]">
              <svg viewBox="0 0 16 16" className="size-4"><path d="M1 2h14v4H1zM1 9h8v5H1z" fill="#fff" stroke="#777" /><path d="M3 4h9M3 11h4M15 6v5h-4" stroke="#555" fill="none" /></svg>
            </button>
          </div>
          <div className="flex items-center gap-1">
            <div className={clsx(BTN, "w-[69px]")}><Lines kind="l" /><Lines kind="c" /><Lines kind="r" /></div>
            <button aria-label="Merge" className="flex items-center gap-1 pl-0.5">
              <svg viewBox="0 0 16 14" className="h-3.5 w-4"><path d="M0.5 0.5h15v13H0.5zM0 4h16M0 10h16M8 0v4M8 10v4" fill="#fff" stroke="#555" /><path d="M1 7h3M12 7h3M7 6h2v2H7z" stroke="#000" fill="none" /></svg>
              <Caret />
            </button>
          </div>
          <div className="flex gap-1">
            <div className={clsx(BTN, "w-[45px] justify-around")}>
              {["M5 2h11M8 5h8M8 8h8M5 11h11", "M5 2h11M8 5h5M8 8h5M5 11h11"].map((d, i) => (
                <button key={d} aria-label={i ? "Increase indent" : "Decrease indent"}>
                  <svg viewBox="0 0 16 13" className="h-[13px] w-4"><path d={d} stroke="#111" strokeWidth="1.5" /><path d={i ? "M0 4v5l5-2.5z" : "M5 4v5L0 6.5z"} fill="#2f6fd0" /></svg>
                </button>
              ))}
            </div>
            <button aria-label="Orientation" className={clsx(BTN, "w-[31px] justify-around")}>
              <svg viewBox="0 0 16 14" className="h-3.5 w-4"><path d="M2 9a2 2 0 1 1 3 2M5 6l4 4M9 4a2 2 0 1 1 1 4M8 2l3 4" fill="none" stroke="#222" strokeWidth="1.3" /><path d="M5 13L15 6M12 6h3v3" fill="none" stroke="#777" /></svg>
              <Caret />
            </button>
          </div>
        </div>
      </Group>
      <Group label="数字" launcher className="w-[89px]">
        <div className="flex flex-col gap-[3px] pt-0.5 text-black">
          <div className="relative h-[25px]">
            <select aria-label="Number format" className="block size-full appearance-none border border-[#b5cce8] bg-[#edf4fc] pl-0.5 text-xs"><option>常规</option></select>
            <span className="pointer-events-none absolute top-2.5 right-1 flex"><Caret /></span>
          </div>
          <div className={clsx(BTN, "justify-between px-1")}>
            <svg viewBox="0 0 18 16" className="h-4 w-[18px]"><rect x="1" y="1" width="15" height="8" rx="1" fill="#3c6cc0" stroke="#24457f" /><circle cx="8" cy="5" r="2" fill="#dfe9f8" /><path d="M8 11h9v4H8zM10 8h7v4h-7z" fill="#f2c14e" stroke="#9a7420" strokeWidth=".7" /></svg>
            <Caret />
            <button>%</button>
            <button className="pr-1 text-base leading-4 font-bold">,</button>
          </div>
          <div className={clsx(BTN, "w-[54px] justify-around")}>
            <button aria-label="Increase decimal">
              <svg viewBox="0 0 18 20" className="h-5 w-[18px]"><path d="M1 6h6M1 6l2-2M1 6l2 2" stroke="#2f6fd0" fill="none" /><text x="17" y="9" fontSize="8" textAnchor="end">.0</text><text x="17" y="18" fontSize="8" textAnchor="end">.00</text></svg>
            </button>
            <button aria-label="Decrease decimal">
              <svg viewBox="0 0 18 20" className="h-5 w-[18px]"><path d="M1 15h6M7 15l-2-2M7 15l-2 2" stroke="#2f6fd0" fill="none" /><text x="17" y="9" fontSize="8" textAnchor="end">.00</text><text x="17" y="18" fontSize="8" textAnchor="end">.0</text></svg>
            </button>
          </div>
        </div>
      </Group>
      <Group label="样式" className="w-[117px]">
        <div className="flex flex-col pl-0.5">
          {([["条件格式", "#d8403a"], ["套用表格格式", "#5b8bdc"], ["单元格样式", "#f0cf6a"]] as const).map(([t, c]) => (
            <button key={t} className="flex h-[22px] items-center gap-[3px] whitespace-nowrap"><TableIcon accent={c} />{t}<span className="pl-0.5"><Caret /></span></button>
          ))}
        </div>
      </Group>
      <Group label="单元格" className="w-[69px]">
        <div className="flex flex-col pl-0.5">
          {([["插入", "#4f7fd0"], ["删除", "#e23a2a"], ["格式", "#9ec0f0"]] as const).map(([t, c]) => (
            <button key={t} className="flex h-[22px] items-center gap-[3px] whitespace-nowrap">
              <svg viewBox="0 0 16 16" className="size-4 shrink-0"><path d="M1.5 1.5h5v3h-5zM1.5 6.5h5v3h-5zM1.5 11.5h5v3h-5z" fill="#fff" stroke="#444" />{t === "删除" ? <path d="M8 3l7 7M15 3l-7 7" stroke={c} strokeWidth="2.5" /> : <path d="M8 8h3M11 6h4v4h-4z" fill={c} stroke="#234" />}</svg>
              {t}<span className="pl-0.5"><Caret /></span>
            </button>
          ))}
        </div>
      </Group>
      <Group label="编辑" className="w-[123px]">
        <div className="flex">
          <div className="flex w-[30px] shrink-0 flex-col pl-0.5">
            <button className="flex h-[22px] items-center gap-2 text-base font-bold text-black"><span className="w-3">Σ</span><Caret /></button>
            <button aria-label="Fill" className="flex h-[22px] items-center gap-2"><svg viewBox="0 0 12 14" className="h-3.5 w-3"><rect x="0.5" y="0.5" width="11" height="13" fill="#e9f1fc" stroke="#345" /><path d="M4 3h4v4h2l-4 5-4-5h2z" fill="#2b6fe0" /></svg><Caret /></button>
            <button aria-label="Clear" className="flex h-[22px] items-center gap-1.5"><svg viewBox="0 0 14 12" className="h-3 w-3.5"><path d="M1 8l6-7h6l-6 8H2z" fill="#fff" stroke="#556" /><path d="M1 11h12" stroke="#000" /></svg><Caret /></button>
          </div>
          <button className="flex w-9 shrink-0 flex-col items-center pt-1 leading-[17px] whitespace-nowrap">
            <svg viewBox="0 0 30 32" className="h-8 w-[30px] shrink-0"><path d="M10 5h19l-7 10v12l-5-3v-9z" fill="#a9a9a9" stroke="#666" /><text x="0" y="12" fontSize="13" fontWeight="bold" fill="#3a69b8">A</text><text x="0" y="28" fontSize="13" fontWeight="bold" fill="#a2302a">Z</text></svg>
            排序和<br />
            <span className="flex items-center gap-1">筛选<Caret /></span>
          </button>
          <button className="ml-1.5 flex w-9 shrink-0 flex-col items-center pt-1 leading-[17px] whitespace-nowrap">
            <svg viewBox="0 0 30 32" className="h-8 w-[30px] shrink-0"><path d="M4 12l4-9h4l2 8v14H2v-6zM26 12l-4-9h-4l-2 8v14h12v-6z" fill="#4669a8" stroke="#1f3768" /><rect x="12" y="10" width="6" height="6" fill="#8aa7d6" stroke="#1f3768" /><path d="M4 17h8M18 17h8" stroke="#c8d8f2" strokeWidth="2" /></svg>
            查找和<br />
            <span className="flex items-center gap-1">选择<Caret /></span>
          </button>
        </div>
      </Group>
    </div>
  );
}

function Excel() {
  return (
    <section className="absolute top-[356px] right-0 bottom-0 left-[1167px] flex flex-col overflow-hidden rounded-tl-lg border-t border-l border-[#33405a] bg-[linear-gradient(180deg,#8086cf_0,#8a90d6_32%,#1a1ac0_38%,#1a22a8_50%,#a034b0_56%,#a034b0_92%,#a8d4dc_94%)] pl-[7px] shadow-[0_0_8px_rgba(0,0,0,0.6),inset_1px_1px_rgba(255,255,255,0.7)]">
      {/* title bar with the histogram showing through the glass */}
      <div className={clsx(UI, "relative -ml-[6px] flex h-[28px] shrink-0 items-center bg-[linear-gradient(90deg,#8c88c8_0,#b5c4dc_5%,#94c8d0_12%,#8fc6cf_55%,#6ea4ae_66%,#a6d0da_85%,#c2dfe8_100%)]")}>
        <span className="absolute top-0.5 left-[172px] h-5 w-[218px] bg-[#a8283a]/80 blur-[3px]" />
        <span className="absolute top-1 left-[236px] h-5 w-[320px] rounded-full bg-white/20 blur-[5px]" />
        <div className="relative ml-[34px] flex h-[21px] w-[50px] items-center justify-end rounded-r-full border border-white/40 bg-white/20 pr-2.5">
          <svg viewBox="0 0 14 14" className="size-3.5"><path d="M0.5 0.5h13v13h-13z" fill="#3b4fb0" stroke="#1d2a78" /><rect x="3" y="1" width="8" height="6" fill="#fff" /><rect x="4" y="9" width="6" height="4" fill="#c8cfe6" /></svg>
        </div>
        <svg viewBox="0 0 8 8" className="relative ml-2 h-2 w-2"><path d="M1 1h6M1 4h6L4 7z" fill="#26375c" stroke="#26375c" /></svg>
        <span className="relative flex-1 pr-[60px] text-center text-xs whitespace-pre">4X0VM002A0制作单.xls  [兼容模式]  -  Microsoft Excel</span>
        <div className="absolute top-0 right-0 flex h-[18px] rounded-bl-md border border-t-0 border-[#4a5a70] bg-linear-to-b from-white/70 to-[#8ea4b8]">
          <button aria-label="Minimize" className="flex w-7 items-center justify-center border-r border-[#4a5a70]"><span className="mt-1 h-1 w-3 border border-[#444] bg-white" /></button>
          <button aria-label="Maximize" className="flex w-7 items-center justify-center border-r border-[#4a5a70]"><span className="h-2.5 w-3 border-3 border-white outline outline-[#444]" /></button>
          <button aria-label="Close" className="w-2.5 bg-[#c8432c]" />
        </div>
      </div>
      <button aria-label="Office button" className="absolute top-2 left-2.5 size-[35px] rounded-full border border-[#8b96b0] bg-radial from-white via-[#eef0f6] to-[#b9bfd2]">
        <svg viewBox="0 0 34 34">
          <rect x="8" y="8" width="9" height="9" rx="2" fill="none" stroke="#e0502a" strokeWidth="3" />
          <rect x="19" y="12" width="6" height="6" rx="1" fill="none" stroke="#3a7ad8" strokeWidth="2.5" />
          <rect x="10" y="20" width="7" height="6" rx="1" fill="none" stroke="#f2b52c" strokeWidth="2.5" />
          <rect x="18" y="19" width="9" height="8" rx="2" fill="none" stroke="#62a63a" strokeWidth="3" />
        </svg>
      </button>
      <div className={clsx(UI, "flex h-[27px] shrink-0 items-end gap-[7px] border-t border-[#3d5577] bg-[#bfdbff] pl-[46px] text-xs text-[#15428b]")}>
        {tabs.map((t, i) => (
          <button key={t} className={clsx("h-[25px] px-[11px] pb-1 leading-5 whitespace-nowrap", i === 0 && "rounded-t border border-b-0 border-[#a8c4ea] bg-[#eaf3fd]")}>
            {t}
          </button>
        ))}
        <span className="flex-1" />
        <div className="flex h-full items-center gap-3 pr-4">
          <button className="size-3.5 rounded-full border border-[#1c4ea8] bg-[#2f6fe0] text-[10px] leading-3 font-bold text-white">?</button>
          <button aria-label="Minimize workbook" className="mt-1 h-0.5 w-[7px] bg-[#6f7f98]" />
        </div>
      </div>
      <Ribbon />
      <div className={clsx(SERIF, "flex h-[21px] shrink-0 border-t border-b border-[#7593b8] bg-white text-base leading-[19px]")}>
        <label className="flex w-40 items-center">
          <input aria-label="Name box" defaultValue="B47" className="w-[145px] text-center outline-none" />
          <svg viewBox="0 0 8 4" className="h-1 w-2"><path d="M0 0h8L4 4z" /></svg>
        </label>
        <div className="flex w-[77px] items-center justify-between rounded-l-full border-r border-[#7593b8] bg-linear-to-b from-[#e8f0fb] to-[#a9c5ea] px-1">
          <span className="size-2.5 rounded-full bg-[#b3bccb]" />
          <span className="font-bold text-[#444] italic">fx</span>
        </div>
        <input aria-label="Formula" defaultValue="0.75" className="flex-1 pl-3 outline-none" />
      </div>
      <div className="h-1 shrink-0 border-b border-[#7593b8] bg-[#dce8f6]" />
      <div className="min-h-0 flex-1 overflow-hidden bg-white">
        <table className={clsx(SERIF, "w-full table-fixed border-separate border-spacing-0 text-base leading-[18px]")}>
          <colgroup>
            <col className="w-[33px]" />
            <col className="w-[149px]" />
            <col />
            <col className="w-[8px]" />
          </colgroup>
          <thead>
            <tr className="h-[19px] text-[#26333f]">
              <th className="border-r border-b border-[#8ea9c8] bg-[#a9c4e9] p-0">
                <svg viewBox="0 0 10 10" className="mr-1 ml-auto size-2.5"><path d="M10 0v10H0z" fill="#e4edf9" /></svg>
              </th>
              <th className="border-b border-[#8ea9c8] bg-linear-to-b from-[#f6f9fc] to-[#d5dde8] p-0 font-normal">A</th>
              <th className="border-r border-b border-l border-[#e88e3a] bg-linear-to-b from-[#f8d79b] to-[#efbc5c] p-0 font-normal">B</th>
              <th className="border-b border-[#8ea9c8] bg-[#e4ebf4] p-0" />
            </tr>
          </thead>
          <tbody>
            {sheet.map(([n, a, b, hot]) => (
              <tr key={n} className="h-[19px] whitespace-nowrap">
                <td className="border-r border-b border-[#9eb6ce] bg-[#e4ecf7] p-0 text-center text-[#33424f]">{n}</td>
                <td className="border-r-2 border-b border-black p-0 pl-px">{a}</td>
                <td className={clsx("border-r-2 border-b border-black p-0", hot && "bg-[#ffff00]", b === "√" ? "pl-1.5" : b === "飞针测试＋阻抗测试" ? "pl-2" : "pl-0.5")}>{b}</td>
                <td className="border-b border-[#d0d7e5] p-0" />
              </tr>
            ))}
          </tbody>
        </table>
      </div>
    </section>
  );
}

function MessagePopup() {
  return (
    <section className={clsx(CJK, "absolute right-0.5 bottom-0 flex h-[94px] w-[213px] flex-col overflow-hidden border border-[#a9bccb] bg-[#dbe6ef] px-0.5 font-bold")}>
      <div className="flex h-[23px] shrink-0 items-center gap-1 bg-linear-to-b from-[#b9cddb] to-[#dde8f0] pl-1 text-[10px]">
        <svg viewBox="0 0 20 16" className="h-4 w-5">
          <path d="M2 8v6h8V8" fill="#fff" stroke="#888" />
          <path d="M0 8l7-6 8 5" fill="none" stroke="#e03030" strokeWidth="2" />
          <path d="M12 15C4 10 6 5 9 6q2 0 3 2 1-2 4-2c4 1 2 6-4 9z" fill="#e87a6a" stroke="#8a2a20" strokeWidth=".7" />
        </svg>
        系统提示
      </div>
      <div className="flex-1 border border-[#9fb4c6] bg-linear-to-b from-white to-[#c4dcf0] pt-3.5 text-[19px] leading-[34px] whitespace-nowrap text-[#8a6347]">
        <p className="pl-[18px]">有系统消息</p>
        <p className="pr-[18px] text-right">请注意查收!</p>
      </div>
    </section>
  );
}

export default function App() {
  return (
    <div className={clsx(MONO, "relative flex h-screen overflow-hidden text-black")}>
      <div className="flex min-w-0 flex-1 flex-col">
        <TopBar />
        <main className="flex min-h-0 flex-1">
          <SidePanel />
          <Board />
          <ToolPalette />
        </main>
        <BottomBar />
      </div>
      <div className="w-[9px] bg-linear-to-r from-[#8fa9cf] via-[#dfeaf6] to-[#b8cfe8]" />

      <ResultsViewer />
      <MeasurePopup />
      <ChecklistEditor />
      <Histogram />
      <Excel />
      <MessagePopup />

      {/* annotations */}
      <div className="pointer-events-none absolute top-[764px] left-[1191px] h-8 w-[271px] border-2 border-[#f01ee0] shadow-[2px_2px_4px_rgba(0,0,0,0.4)]" />
      <svg viewBox="0 0 100 140" className="pointer-events-none absolute top-[288px] left-[1362px] h-[140px] w-[100px]">
        <path d="M9 14L93 137" stroke="#2fd83a" strokeOpacity="0.7" strokeWidth="3" />
        <path d="M2 1l13 14-5 1-1 5z" fill="#5f9a18" stroke="#5f9a18" strokeWidth="2" />
      </svg>
    </div>
  );
}
